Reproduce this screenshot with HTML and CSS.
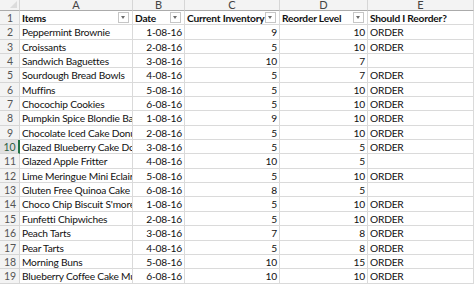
FILE: index.html
```html
<!DOCTYPE html>
<html lang="en">
<head>
    <meta charset="UTF-8">
    <meta name="viewport" content="width=device-width, initial-scale=1.0">
    <title>Bakery Inventory</title>
    <link rel="stylesheet" href="styles.css">
</head>
<body>
    <div class="sheet">
        <div class="corner"><span class="tri"></span></div>
        <div class="colhead">A</div>
        <div class="colhead">B</div>
        <div class="colhead">C</div>
        <div class="colhead">D</div>
        <div class="colhead">E</div>

        <div class="rowhead">1</div>
        <div class="cell head"><span>Items</span><i class="filter"></i></div>
        <div class="cell head"><span>Date</span><i class="filter"></i></div>
        <div class="cell head"><span>Current Inventory</span><i class="filter"></i></div>
        <div class="cell head"><span>Reorder Level</span><i class="filter"></i></div>
        <div class="cell head"><span>Should I Reorder?</span></div>
    </div>

    <script>
        // rows 2-19 of the sheet
        const rows = [
            ["Peppermint Brownie", "1-08-16", 9, 10, "ORDER"],
            ["Croissants", "2-08-16", 5, 10, "ORDER"],
            ["Sandwich Baguettes", "3-08-16", 10, 7, ""],
            ["Sourdough Bread Bowls", "4-08-16", 5, 7, "ORDER"],
            ["Muffins", "5-08-16", 5, 10, "ORDER"],
            ["Chocochip Cookies", "6-08-16", 5, 10, "ORDER"],
            ["Pumpkin Spice Blondie Bars", "1-08-16", 9, 10, "ORDER"],
            ["Chocolate Iced Cake Donuts", "2-08-16", 5, 10, "ORDER"],
            ["Glazed Blueberry Cake Donuts", "3-08-16", 5, 5, "ORDER"],
            ["Glazed Apple Fritter", "4-08-16", 10, 5, ""],
            ["Lime Meringue Mini Eclairs", "5-08-16", 5, 10, "ORDER"],
            ["Gluten Free Quinoa Cake", "6-08-16", 8, 5, ""],
            ["Choco Chip Biscuit S'mores", "1-08-16", 5, 10, "ORDER"],
            ["Funfetti Chipwiches", "2-08-16", 5, 10, "ORDER"],
            ["Peach Tarts", "3-08-16", 7, 8, "ORDER"],
            ["Pear Tarts", "4-08-16", 5, 8, "ORDER"],
            ["Morning Buns", "5-08-16", 10, 15, "ORDER"],
            ["Blueberry Coffee Cake Muffins", "6-08-16", 10, 10, "ORDER"]
        ];

        const sheet = document.querySelector(".sheet");
        rows.forEach((r, i) => {
            const n = i + 2;
            const html = `
                <div class="rowhead${n === 10 ? " active" : ""}">${n}</div>
                <div class="cell">${r[0]}</div>
                <div class="cell num">${r[1]}</div>
                <div class="cell num">${r[2]}</div>
                <div class="cell num">${r[3]}</div>
                <div class="cell">${r[4]}</div>`;
            sheet.insertAdjacentHTML("beforeend", html);
        });
    </script>
</body>
</html>
```

FILE: styles.css
```css
body {
    margin: 0;
    background-color: #fff;
    font-family: Lato, "Liberation Sans", sans-serif;
    font-size: 10.2px;
    letter-spacing: -0.2px;
    color: #111;
    overflow: hidden;
}

.sheet {
    display: grid;
    grid-template-columns: 20px 113px 52px 95px 88px 106px;
    grid-template-rows: 11px;
    grid-auto-rows: 14.35px;
}

.corner,
.colhead,
.rowhead {
    background-color: #f3f3f3;
    color: #444;
    letter-spacing: 0;
    box-sizing: border-box;
    border-right: 1px solid #d6d6d6;
    border-bottom: 1px solid #d6d6d6;
}

.corner {
    position: relative;
    border-bottom: 1px solid #ababab;
}

.corner .tri {
    position: absolute;
    right: 2px;
    bottom: 2px;
    width: 0;
    height: 0;
    border-left: 7px solid transparent;
    border-bottom: 7px solid #dcdcdc;
}

.colhead {
    text-align: center;
    font-size: 11px;
    line-height: 9px;
    border-bottom: 1px solid #ababab;
}

.rowhead {
    text-align: center;
    font-size: 10.5px;
    line-height: 14px;
    padding-left: 1px;
    color: #555;
}

.rowhead.active {
    background-color: #e1e1e1;
    color: #2e5d3f;
    border-right: 2px solid #217346;
}

.cell {
    box-sizing: border-box;
    border-right: 1px solid #dadada;
    border-bottom: 1px solid #dadada;
    padding: 0 2px;
    line-height: 14px;
    white-space: nowrap;
    overflow: hidden;
}

.cell.num {
    text-align: right;
}

.cell.head {
    display: flex;
    align-items: center;
    justify-content: space-between;
    font-weight: bold;
}

.filter {
    flex: none;
    width: 9px;
    height: 9px;
    border: 1px solid #c6c6c6;
    background-color: #fff;
    position: relative;
    margin-right: 1px;
}

.filter::after {
    content: "";
    position: absolute;
    left: 2px;
    top: 3px;
    border-left: 2.5px solid transparent;
    border-right: 2.5px solid transparent;
    border-top: 3px solid #6b6b6b;
}
```
